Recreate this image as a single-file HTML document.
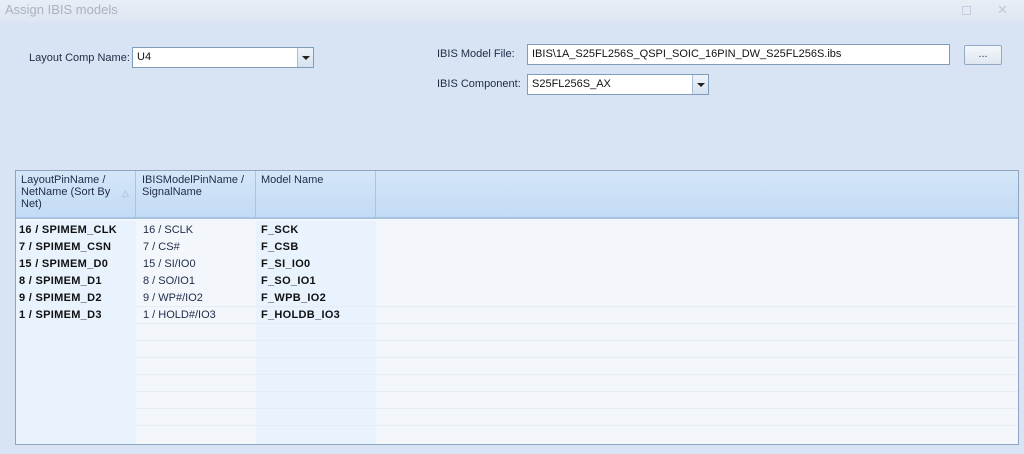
<!DOCTYPE html>
<html><head><style>
*{margin:0;padding:0;box-sizing:border-box}
body{width:1024px;height:454px;overflow:hidden;background:#d8e4f3;font-family:"Liberation Sans",sans-serif;font-size:11px;color:#1e2b48;position:relative}
.title{position:absolute;left:0;top:0;width:1024px;height:22px;background:linear-gradient(#e9eef5,#dde6f1);color:#a9b3c1;font-size:13px;padding:2px 0 0 5px}
.abs{position:absolute}
.box{position:absolute;background:#fff;border:1px solid #7f9db9;height:21px;padding:3px 0 0 4px;color:#111}
.dd{position:absolute;top:0;right:0;width:16px;height:19px;border-left:1px solid #a9bcd6;background:linear-gradient(#eef3f9,#d6e2f0)}
.dd:after{content:"";position:absolute;left:4px;top:8px;border:4px solid transparent;border-top:4px solid #222;border-bottom:0}
.grid{position:absolute;left:15px;top:170px;width:1004px;height:275px;border:1px solid #8ea4c0;background:#f3f7fc;overflow:hidden}
.hdr{position:absolute;left:0;top:0;width:1002px;height:48px;background:linear-gradient(#d4e6f9,#c3dbf4);border-bottom:2px solid #a7c3e4}
.hc{position:absolute;top:3px;line-height:12px;color:#1e2b48}
.vs{position:absolute;top:0;width:1px;height:48px;background:#a9c3e1}
.col{position:absolute;top:50px;height:230px;background:#e9f3fd}
.row{position:absolute;left:0;width:1002px;height:17px;font-size:11px;line-height:17px}
.row span{position:absolute}
.b{font-weight:bold;color:#111;letter-spacing:0.3px}
.hl{position:absolute;left:120px;width:882px;height:1px;background:#e6ecf4}
</style></head><body>
<div class="title">Assign IBIS models</div>
<div class="abs" style="left:962px;top:6px;width:9px;height:9px;border:1px solid #c5ceda"></div>
<div class="abs" style="left:997px;top:2px;color:#c0c9d6;font-size:13px">✕</div>
<div class="abs" style="left:29px;top:52px">Layout Comp Name:</div>
<div class="box" style="left:132px;top:47px;width:182px">U4<div class="dd"></div></div>
<div class="abs" style="left:437px;top:48px">IBIS Model File:</div>
<div class="box" style="left:527px;top:44px;width:423px">IBIS\1A_S25FL256S_QSPI_SOIC_16PIN_DW_S25FL256S.ibs</div>
<div class="abs" style="left:964px;top:45px;width:38px;height:20px;border:1px solid #93a8c4;border-radius:2px;background:linear-gradient(#f4f7fb,#dfe7f1);text-align:center;line-height:16px;color:#333">...</div>
<div class="abs" style="left:437px;top:78px">IBIS Component:</div>
<div class="box" style="left:527px;top:74px;width:182px">S25FL256S_AX<div class="dd"></div></div>
<div class="grid">
<div class="col" style="left:0;width:120px"></div>
<div class="col" style="left:240px;width:120px"></div>
<div class="hl" style="top:135px"></div><div class="hl" style="top:152px"></div><div class="hl" style="top:169px"></div><div class="hl" style="top:186px"></div><div class="hl" style="top:203px"></div><div class="hl" style="top:220px"></div><div class="hl" style="top:237px"></div><div class="hl" style="top:254px"></div>
<div class="hdr">
<div class="hc" style="left:5px">LayoutPinName /<br>NetName (Sort By<br>Net)</div>
<div class="hc" style="left:106px;top:16px;color:#9fb2c8;font-size:9px">△</div>
<div class="vs" style="left:119px"></div>
<div class="hc" style="left:126px">IBISModelPinName /<br>SignalName</div>
<div class="vs" style="left:239px"></div>
<div class="hc" style="left:245px">Model Name</div>
<div class="vs" style="left:359px"></div>
</div>
<div class="row" style="top:51px"><span class="b" style="left:3px">16 / SPIMEM_CLK</span><span style="left:127px">16 / SCLK</span><span class="b" style="left:245px">F_SCK</span></div>
<div class="row" style="top:68px"><span class="b" style="left:3px">7 / SPIMEM_CSN</span><span style="left:127px">7 / CS#</span><span class="b" style="left:245px">F_CSB</span></div>
<div class="row" style="top:85px"><span class="b" style="left:3px">15 / SPIMEM_D0</span><span style="left:127px">15 / SI/IO0</span><span class="b" style="left:245px">F_SI_IO0</span></div>
<div class="row" style="top:102px"><span class="b" style="left:3px">8 / SPIMEM_D1</span><span style="left:127px">8 / SO/IO1</span><span class="b" style="left:245px">F_SO_IO1</span></div>
<div class="row" style="top:119px"><span class="b" style="left:3px">9 / SPIMEM_D2</span><span style="left:127px">9 / WP#/IO2</span><span class="b" style="left:245px">F_WPB_IO2</span></div>
<div class="row" style="top:136px"><span class="b" style="left:3px">1 / SPIMEM_D3</span><span style="left:127px">1 / HOLD#/IO3</span><span class="b" style="left:245px">F_HOLDB_IO3</span></div>
</div>
</body></html>
